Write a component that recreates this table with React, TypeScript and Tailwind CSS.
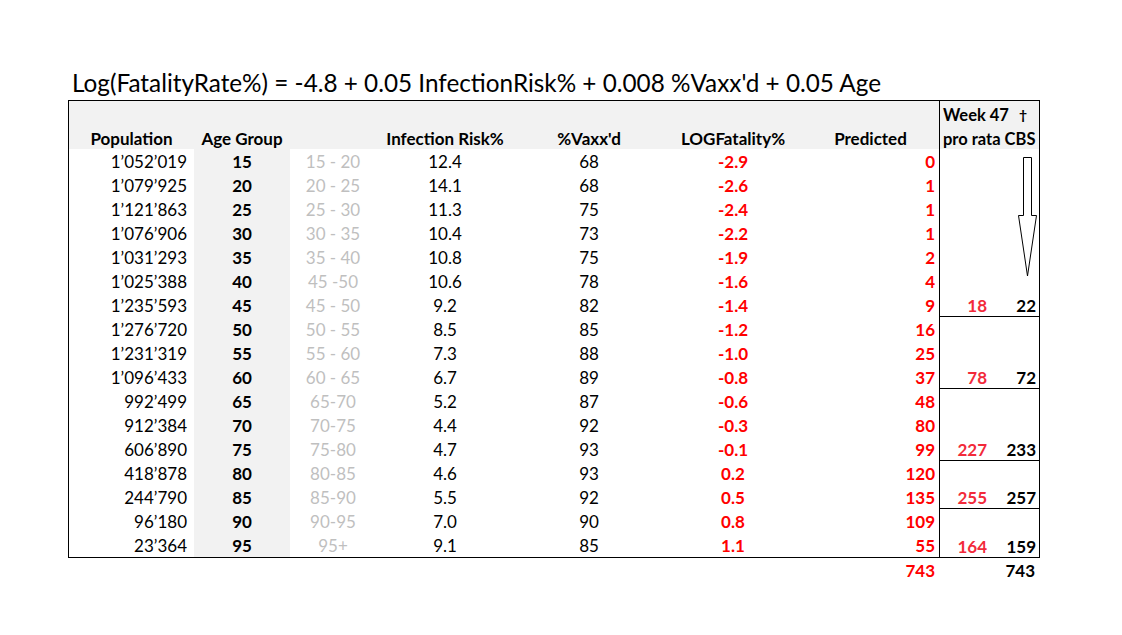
const rows = [
  ["1’052’019", "15", "15 - 20", "12.4", "68", "-2.9", "0"],
  ["1’079’925", "20", "20 - 25", "14.1", "68", "-2.6", "1"],
  ["1’121’863", "25", "25 - 30", "11.3", "75", "-2.4", "1"],
  ["1’076’906", "30", "30 - 35", "10.4", "73", "-2.2", "1"],
  ["1’031’293", "35", "35 - 40", "10.8", "75", "-1.9", "2"],
  ["1’025’388", "40", "45 -50", "10.6", "78", "-1.6", "4"],
  ["1’235’593", "45", "45 - 50", "9.2", "82", "-1.4", "9"],
  ["1’276’720", "50", "50 - 55", "8.5", "85", "-1.2", "16"],
  ["1’231’319", "55", "55 - 60", "7.3", "88", "-1.0", "25"],
  ["1’096’433", "60", "60 - 65", "6.7", "89", "-0.8", "37"],
  ["992’499", "65", "65-70", "5.2", "87", "-0.6", "48"],
  ["912’384", "70", "70-75", "4.4", "92", "-0.3", "80"],
  ["606’890", "75", "75-80", "4.7", "93", "-0.1", "99"],
  ["418’878", "80", "80-85", "4.6", "93", "0.2", "120"],
  ["244’790", "85", "85-90", "5.5", "92", "0.5", "135"],
  ["96’180", "90", "90-95", "7.0", "90", "0.8", "109"],
  ["23’364", "95", "95+", "9.1", "85", "1.1", "55"],
];

// week 47 groups: number of rows, pro rata, CBS
const groups: [number, string, string, boolean][] = [
  [7, "18", "22", true],
  [3, "78", "72", true],
  [3, "227", "233", true],
  [2, "255", "257", true],
  [2, "164", "159", false],
];

const cols = "grid grid-cols-[125px_96px_86px_138px_150px_138px_137px]";

function DownArrow() {
  return (
    <svg
      className="absolute left-[77px] top-[7px]"
      width="22"
      height="124"
      viewBox="0 0 22 124"
    >
      <path
        d="M6.5 1.5 H14.5 V59.5 H19.5 L10.5 120 L1.5 59.5 H6.5 Z"
        fill="white"
        stroke="black"
        strokeWidth="1"
      />
    </svg>
  );
}

export default function App() {
  return (
    <div
      className="w-[1122px] h-[635px] bg-white text-black text-[17px]"
      style={{ fontFamily: "Lato, 'Open Sans', sans-serif" }}
    >
      <div className="pt-[66px] pl-[68px]">
        <div className="pl-[4px] h-[34px] text-[24.3px] leading-[34px] whitespace-nowrap">
          Log(FatalityRate%) = -4.8 + 0.05 InfectionRisk% + 0.008 %Vaxx'd + 0.05 Age
        </div>

        <div className="flex w-[972px] border border-black">
          {/* main table */}
          <div className="w-[870px]">
            <div className={`${cols} grid-rows-[48px] h-[48px] bg-[#f2f2f2] font-bold`}>
              <div className="flex items-end justify-center leading-[20px]">Population</div>
              <div className="flex items-end justify-center leading-[20px]">Age Group</div>
              <div />
              <div className="flex items-end justify-center leading-[20px]">Infection Risk%</div>
              <div className="flex items-end justify-center leading-[20px]">%Vaxx'd</div>
              <div className="flex items-end justify-center leading-[20px]">LOGFatality%</div>
              <div className="flex items-end justify-center leading-[20px]">Predicted</div>
            </div>
            {rows.map((r) => (
              <div key={r[1]} className={`${cols} grid-rows-[24px] h-[24px] leading-[26px]`}>
                <div className="text-right pr-[7px]">{r[0]}</div>
                <div className="text-center font-bold bg-[#f2f2f2]">{r[1]}</div>
                <div className="text-center text-[#bfbfbf]">{r[2]}</div>
                <div className="text-center">{r[3]}</div>
                <div className="text-center">{r[4]}</div>
                <div className="text-center font-bold text-[#ff0000]">{r[5]}</div>
                <div className="text-right pr-[4px] font-bold text-[#ff0000]">{r[6]}</div>
              </div>
            ))}
          </div>

          {/* week 47 */}
          <div className="w-[100px] border-l border-black">
            <div className="h-[48px] bg-[#f2f2f2] font-bold text-[16.5px] leading-[24px] pl-[3px] pt-[2px]">
              <div className="flex justify-between pr-[12px] h-[24px]">
                <span>Week 47</span>
                <span className="text-[14px]">†</span>
              </div>
              <div className="whitespace-nowrap h-[22px]">pro rata CBS</div>
            </div>
            {groups.map(([n, pr, cbs, line], i) => (
              <div
                key={pr}
                className={`relative flex flex-col justify-end ${line ? "border-b border-black" : ""}`}
                style={{ height: n * 24 }}
              >
                {i === 0 && <DownArrow />}
                <div className="grid grid-cols-[49px_50px] grid-rows-[23px] h-[23px] leading-[25px] font-bold">
                  <div className="text-right pr-[2px] text-[#f22a3a]">{pr}</div>
                  <div className="text-right pr-[3px]">{cbs}</div>
                </div>
              </div>
            ))}
          </div>
        </div>

        <div className="flex w-[972px] h-[24px] leading-[26px] font-bold">
          <div className="w-[871px] text-right pr-[4px] text-[#ff0000]">743</div>
          <div className="w-[101px] text-right pr-[5px]">743</div>
        </div>
      </div>
    </div>
  );
}
